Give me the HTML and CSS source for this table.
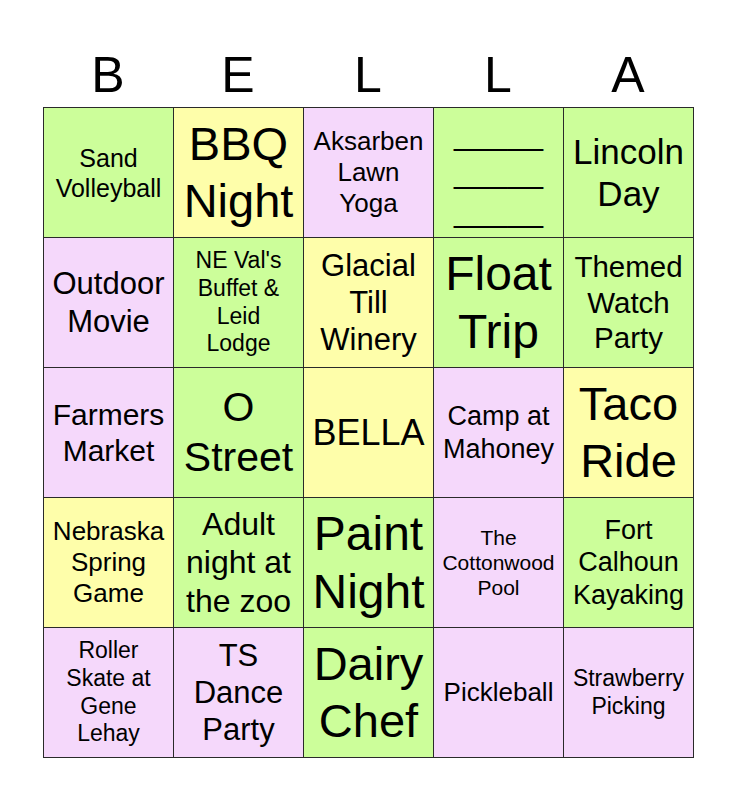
FILE: index.html
```html
<!DOCTYPE html>
<html lang="en">
<head>
<meta charset="utf-8">
<title>BELLA Bingo</title>
<link rel="stylesheet" href="styles.css">
</head>
<body>
<div class="card">
  <div class="head">
    <span>B</span><span>E</span><span>L</span><span>L</span><span>A</span>
  </div>
  <div class="grid">
    <div class="cell green s25">Sand<br>Volleyball</div>
    <div class="cell yellow s47">BBQ<br>Night</div>
    <div class="cell pink s26">Aksarben<br>Lawn<br>Yoga</div>
    <div class="cell green s32">_____<br>_____<br>_____</div>
    <div class="cell green s35">Lincoln<br>Day</div>

    <div class="cell pink s31">Outdoor<br>Movie</div>
    <div class="cell green s23">NE Val's<br>Buffet &amp;<br>Leid<br>Lodge</div>
    <div class="cell yellow s31">Glacial<br>Till<br>Winery</div>
    <div class="cell green s48">Float<br>Trip</div>
    <div class="cell green s29">Themed<br>Watch<br>Party</div>

    <div class="cell pink s30">Farmers<br>Market</div>
    <div class="cell green s41">O<br>Street</div>
    <div class="cell yellow s36">BELLA</div>
    <div class="cell pink s27">Camp at<br>Mahoney</div>
    <div class="cell yellow s47">Taco<br>Ride</div>

    <div class="cell yellow s26">Nebraska<br>Spring<br>Game</div>
    <div class="cell green s32">Adult<br>night at<br>the zoo</div>
    <div class="cell green s48">Paint<br>Night</div>
    <div class="cell pink s21">The<br>Cottonwood<br>Pool</div>
    <div class="cell green s27">Fort<br>Calhoun<br>Kayaking</div>

    <div class="cell pink s23">Roller<br>Skate at<br>Gene<br>Lehay</div>
    <div class="cell pink s31">TS<br>Dance<br>Party</div>
    <div class="cell green s47">Dairy<br>Chef</div>
    <div class="cell pink s26">Pickleball</div>
    <div class="cell pink s23">Strawberry<br>Picking</div>
  </div>
</div>
</body>
</html>
```
FILE: styles.css
```css
html, body {
  margin: 0;
  padding: 0;
  background: #ffffff;
}

body {
  font-family: "Liberation Sans", Arial, sans-serif;
  color: #000000;
}

.card {
  width: 651px;
  margin-left: 43px;
  padding-top: 44px;
}

.head {
  display: grid;
  grid-template-columns: repeat(5, 130px);
  height: 63px;
  line-height: 63px;
  font-size: 50px;
  text-align: center;
}

.grid {
  display: grid;
  grid-template-columns: repeat(5, 129px);
  grid-auto-rows: 129px;
  gap: 1px;
  background: #2a2a2a;
  border: 1px solid #2a2a2a;
  width: max-content;
}

.cell {
  display: flex;
  align-items: center;
  justify-content: center;
  text-align: center;
  line-height: 1.2;
  white-space: nowrap;
  overflow: hidden;
}

.green { background: #ccfe9a; }
.yellow { background: #fefeaa; }
.pink { background: #f5d8fb; }

.s21 { font-size: 21px; }
.s23 { font-size: 23px; }
.s25 { font-size: 25px; }
.s26 { font-size: 26px; }
.s27 { font-size: 27px; }
.s29 { font-size: 29.5px; }
.s30 { font-size: 30px; }
.s31 { font-size: 31px; }
.s32 { font-size: 32px; }
.s35 { font-size: 35px; }
.s36 { font-size: 36px; }
.s41 { font-size: 41px; }
.s47 { font-size: 47px; }
.s48 { font-size: 48px; }
```
